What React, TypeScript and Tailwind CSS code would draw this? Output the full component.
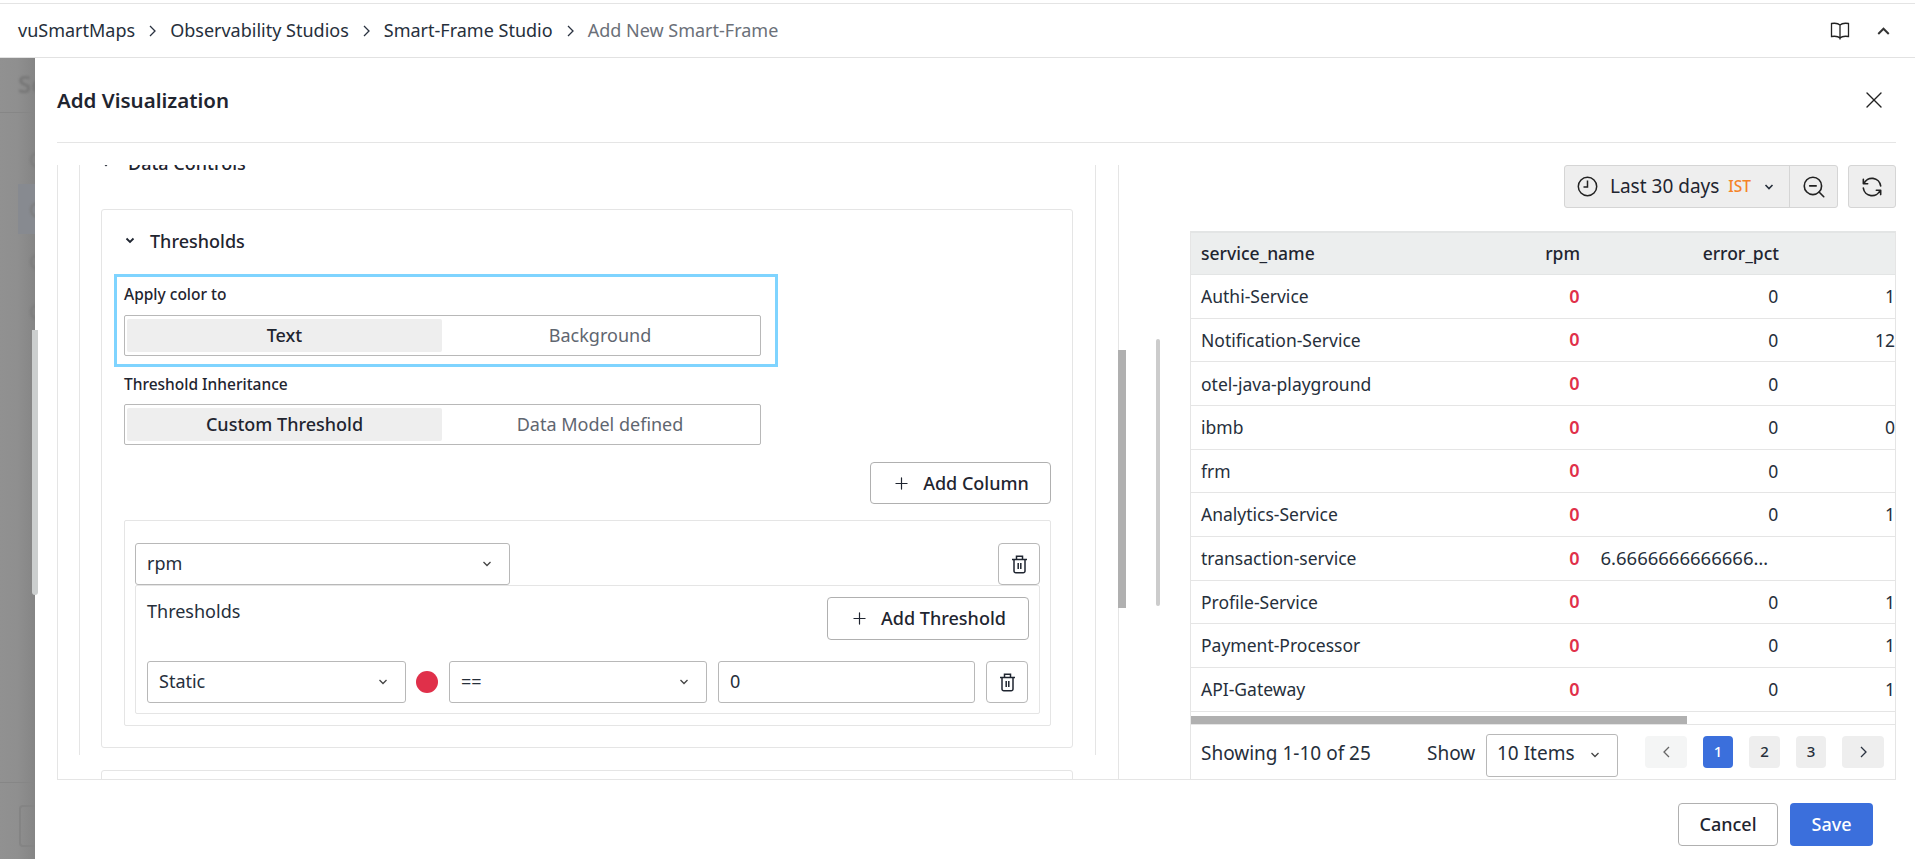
import { Plus, X, ZoomOut } from "lucide-react";

const rows: { name: string; err: string; last: string }[] = [
  { name: "Authi-Service", err: "0", last: "1" },
  { name: "Notification-Service", err: "0", last: "12" },
  { name: "otel-java-playground", err: "0", last: "" },
  { name: "ibmb", err: "0", last: "0" },
  { name: "frm", err: "0", last: "" },
  { name: "Analytics-Service", err: "0", last: "1" },
  { name: "transaction-service", err: "6.666666666666667", last: "" },
  { name: "Profile-Service", err: "0", last: "1" },
  { name: "Payment-Processor", err: "0", last: "1" },
  { name: "API-Gateway", err: "0", last: "1" },
];

function Chevron({ className, weight = 1.3 }: { className?: string; weight?: number }) {
  return (
    <svg className={className} viewBox="0 0 10 6" fill="none" stroke="currentColor" strokeWidth={weight}>
      <path d="M1.5 1l3.5 3.5L8.5 1" />
    </svg>
  );
}

function Crumb({ className = "text-[#2a3240]" }: { className?: string }) {
  return (
    <svg className={`w-[7px] h-[12px] ${className}`} viewBox="0 0 7 12" fill="none" stroke="currentColor" strokeWidth={1.3}>
      <path d="M1 1l5 5-5 5" />
    </svg>
  );
}

function TrashIcon() {
  return (
    <svg className="w-[17px] h-[19px] text-[#1f2530]" viewBox="0 0 17 19" fill="none" stroke="currentColor" strokeWidth={1.5}>
      <path d="M1 4.5h15M5.5 4.5V1.2h6v3.3M3 4.5V16a1.8 1.8 0 001.8 1.8h7.4A1.8 1.8 0 0014 16V4.5" />
      <path d="M7.2 8v6M9.8 8v6" />
    </svg>
  );
}

function Select({ label, className }: { label: string; className: string }) {
  return (
    <div className={`flex items-center justify-between pl-[11px] pr-[17px] h-[42px] border border-[#b8b8b8] rounded-[3px] bg-white text-[#262f3b] ${className}`}>
      <span className="-mt-[2px]">{label}</span>
      <Chevron className="w-[10px] h-[6px] text-[#444]" />
    </div>
  );
}

function Segmented({ left, right }: { left: string; right: string }) {
  return (
    <div className="flex w-[637px] h-[41px] px-[2px] py-[3px] border border-[#b8b8b8] rounded-[2px]">
      <div className="w-[315px] rounded-[2px] bg-[#eeeeee] flex items-center justify-center font-medium text-[#1f2530]">{left}</div>
      <div className="flex-1 flex items-center justify-center text-[#5f6670]">{right}</div>
    </div>
  );
}

function OutlineButton({ label, className }: { label: string; className: string }) {
  return (
    <div className={`flex items-center justify-center gap-[12px] border border-[#b0b0b0] rounded-[4px] bg-white font-medium text-[#1f2530] ${className}`}>
      <Plus className="w-[19px] h-[19px]" strokeWidth={1.5} />
      {label}
    </div>
  );
}

function PageButton({ children, className }: { children: React.ReactNode; className: string }) {
  return (
    <div className={`h-[32px] rounded-[4px] flex items-center justify-center text-[15px] font-medium ${className}`}>{children}</div>
  );
}

export default function App() {
  return (
    <div className="h-[859px] w-[1915px] overflow-hidden flex flex-col bg-white text-[18px] font-['Noto_Sans',sans-serif] text-[#262f3b]">
      {/* Top bar */}
      <div className="h-[58px] shrink-0 border-b border-[#e2e2e2] pt-[3px]">
        <div className="h-[54px] border-t border-[#e4e4e4] flex items-center justify-between pl-[18px] pr-[24px]">
          <div className="flex items-center gap-[14px] text-[#262f3b]">
            <span>vuSmartMaps</span>
            <Crumb />
            <span>Observability Studios</span>
            <Crumb />
            <span>Smart-Frame Studio</span>
            <Crumb />
            <span className="text-[#6b7079]">Add New Smart-Frame</span>
          </div>
          <div className="flex items-center gap-[26px]">
            <svg className="w-[20px] h-[18px] text-[#222]" viewBox="0 0 20 18" fill="none" stroke="currentColor" strokeWidth={1.3}>
              <path d="M10 3C8.5 1.5 5 1 1.5 1.5V14.5C5 14 8.5 14.5 10 16C11.5 14.5 15 14 18.5 14.5V1.5C15 1 11.5 1.5 10 3ZM10 3V17.5" />
            </svg>
            <Chevron className="w-[15px] h-[10px] rotate-180 text-[#333]" />
          </div>
        </div>
      </div>

      <div className="flex-1 flex min-h-0 relative">
        {/* Dimmed page behind the drawer */}
        <div className="w-[35px] shrink-0 bg-gradient-to-r from-[#919191] via-[#8f8f8f] to-[#858585] overflow-hidden relative text-[#777777]">
          <div className="absolute left-[18px] top-[8px] text-[24px] font-semibold blur-[1px]">Se</div>
          <div className="absolute left-0 right-0 top-[54px] border-t border-[#868686]" />
          <div className="absolute left-[18px] right-0 top-[126px] h-[50px] bg-[#878a90]" />
          <div className="absolute left-[30px] top-[94px] w-[16px] h-[16px] rounded-full border-2 border-[#7c7c7c] blur-[1px]" />
          <div className="absolute left-[30px] top-[144px] w-[16px] h-[16px] rounded-full border-2 border-[#7c7c7c] blur-[1px]" />
          <div className="absolute left-[30px] top-[196px] w-[16px] h-[16px] rounded-full border-2 border-[#7c7c7c] blur-[1px]" />
          <div className="absolute left-[30px] top-[246px] w-[16px] h-[16px] rounded-full border-2 border-[#7c7c7c] blur-[1px]" />
          <div className="absolute left-0 right-0 top-[724px] border-t border-[#868686]" />
          <div className="absolute left-[19px] top-[747px] w-[40px] h-[42px] rounded-[4px] border-2 border-[#848484]" />
        </div>
        <div className="absolute left-[32px] top-[272px] w-[6px] h-[265px] rounded-b-[3px] bg-[#cccfcf]" />

        {/* Drawer */}
        <div className="flex-1 min-w-0 bg-white flex flex-col pl-[22px] pr-[19px]">
          <div className="h-[85px] shrink-0 border-b border-[#e5e5e5] flex items-center justify-between">
            <span className="text-[20.5px] font-semibold text-[#1f2530]">Add Visualization</span>
            <X className="w-[28px] h-[28px] mr-[8px] text-[#222]" strokeWidth={1.2} />
          </div>

          <div className="flex-1 min-h-0 mt-[22px] flex border-b border-[#e5e5e5]">
            {/* Config panel */}
            <div className="w-[1062px] shrink-0 h-full overflow-hidden border-x border-[#e5e5e5] pl-[21px] pr-[22px]">
              <div className="border-x border-[#e5e5e5] h-full pl-[21px] pr-[22px]">
                <div className="h-[44px] -mt-[24px] flex items-center gap-[18px] font-medium text-[#1f2530]">
                  <Chevron className="w-[8px] h-[5px] ml-[1px] mt-[2px]" />
                  <span>Data Controls</span>
                </div>

                <div className="border border-[#e5e5e5] rounded-[3px] mt-[24px] h-[539px] pl-[18px] pr-[21px]">
                  <div className="h-[62px] mb-[2px] flex items-center gap-[15px] -ml-[1px] font-medium text-[#1f2530]">
                    <Chevron className="w-[10px] h-[7px] ml-[6px] -mt-[2px]" weight={1.8} />
                    <span>Thresholds</span>
                  </div>

                  <div className="-ml-[6px] w-[664px] h-[93px] border-[3px] border-[#7fd4ff] pl-[7px] flex flex-col">
                    <div className="h-[36px] mb-[2px] flex items-center text-[15.5px] font-medium text-[#1f2530]">Apply color to</div>
                    <Segmented left="Text" right="Background" />
                  </div>

                  <div className="h-[35px] mb-[2px] flex items-center pl-[4px] text-[15.5px] font-medium text-[#1f2530]">Threshold Inheritance</div>
                  <div className="ml-[4px]">
                    <Segmented left="Custom Threshold" right="Data Model defined" />
                  </div>

                  <div className="flex justify-end mt-[17px]">
                    <OutlineButton label="Add Column" className="w-[181px] h-[42px]" />
                  </div>

                  <div className="ml-[4px] mt-[16px] h-[206px] border border-[#e5e5e5] rounded-[2px] pl-[10px] pr-[10px] pt-[22px]">
                    <div className="flex justify-between">
                      <Select label="rpm" className="w-[375px]" />
                      <div className="w-[42px] h-[42px] border border-[#b8b8b8] rounded-[4px] flex items-center justify-center"><TrashIcon /></div>
                    </div>
                    <div className="h-[129px] border border-[#e5e5e5] rounded-[2px] pl-[11px] pr-[10px] pt-[11px]">
                      <div className="flex justify-between">
                        <span className="mt-[1px]">Thresholds</span>
                        <OutlineButton label="Add Threshold" className="w-[202px] h-[43px]" />
                      </div>
                      <div className="flex items-center mt-[21px]">
                        <Select label="Static" className="w-[259px]" />
                        <div className="w-[22px] h-[22px] rounded-full bg-[#e0304a] ml-[10px] mr-[11px]" />
                        <Select label="==" className="w-[258px]" />
                        <div className="w-[257px] h-[42px] ml-[11px] pl-[11px] flex items-center border border-[#b8b8b8] rounded-[3px]"><span className="-mt-[2px]">0</span></div>
                        <div className="w-[42px] h-[42px] ml-[11px] border border-[#b8b8b8] rounded-[4px] flex items-center justify-center"><TrashIcon /></div>
                      </div>
                    </div>
                  </div>
                </div>

                <div className="border border-[#e5e5e5] rounded-[3px] mt-[22px] h-[60px]" />
              </div>
            </div>

            <div className="w-[71px] shrink-0 relative">
              <div className="absolute left-[-1px] top-[185px] w-[8px] h-[258px] bg-[#b0b0b0]" />
              <div className="absolute left-[37px] top-[174px] w-[4px] h-[267px] rounded-full bg-[#cccccc]" />
            </div>

            {/* Preview panel */}
            <div className="flex-1 min-w-0 flex flex-col">
              <div className="flex justify-end gap-[10px] h-[43px] shrink-0">
                <div className="flex h-full w-[274px] bg-[#eeeeee] border border-[#d5d5d5] rounded-[3px]">
                  <div className="flex-1 flex items-center pl-[12px] border-r border-[#d5d5d5]">
                    <svg className="w-[21px] h-[21px] text-[#222] mr-[12px]" viewBox="0 0 21 21" fill="none" stroke="currentColor" strokeWidth={1.5}>
                      <circle cx="10.5" cy="10.5" r="9.2" />
                      <path d="M10.5 4.5v6.5H6.5" />
                    </svg>
                    <span className="text-[#1f2530] text-[19px]">Last 30 days</span>
                    <span className="text-[15.5px] font-medium text-[#f5842a] ml-[9px]">IST</span>
                    <Chevron className="w-[10px] h-[6px] ml-[13px]" weight={1.6} />
                  </div>
                  <div className="w-[47px] flex items-center justify-center">
                    <ZoomOut className="w-[26px] h-[26px] text-[#222]" strokeWidth={1.5} />
                  </div>
                </div>
                <div className="w-[48px] h-full bg-[#eeeeee] border border-[#d5d5d5] rounded-[3px] flex items-center justify-center">
                  <svg className="w-[26px] h-[26px] text-[#222]" viewBox="0 0 24 24" fill="none" stroke="currentColor" strokeWidth={1.5} strokeLinecap="round" strokeLinejoin="round">
                    <path d="M20 11a8.1 8.1 0 0 0-15.5-2m-.5-4v4h4" />
                    <path d="M4 13a8.1 8.1 0 0 0 15.5 2m.5 4v-4h-4" />
                  </svg>
                </div>
              </div>

              <div className="flex-1 min-h-0 mt-[23px] border-x border-[#e5e5e5] flex flex-col overflow-hidden text-[17.5px]">
                <div className="h-[44px] shrink-0 flex items-center bg-[#eceeee] border-t-2 border-b border-[#e3e5e5] font-medium text-[#1f2530]">
                  <div className="w-[299px] pl-[10px]">service_name</div>
                  <div className="w-[100px] pr-[10px] text-right">rpm</div>
                  <div className="w-[199px] pr-[10px] text-right">error_pct</div>
                </div>
                {rows.map((row) => (
                  <div key={row.name} className="h-[43.67px] shrink-0 flex items-center border-b border-[#e5e5e5] last:border-b-0">
                    <div className="w-[299px] pl-[10px]">{row.name}</div>
                    <div className="w-[100px] pr-[10px] text-right font-semibold text-[18px] text-[#e0304a]">0</div>
                    <div className={row.err.length > 1 ? "w-[199px] pl-[11px] pr-[19px] text-[18.5px] truncate" : "w-[199px] pr-[10px] text-right"}>{row.err}</div>
                    <div className="w-[107px] text-right">{row.last}</div>
                  </div>
                ))}
                <div className="h-[4px] shrink-0" />
                <div className="h-[9px] shrink-0 border-b border-[#e5e5e5]">
                  <div className="w-[496px] h-[8px] bg-[#b0b0b0]" />
                </div>
                <div className="flex-1 min-h-0 flex items-start pt-[9px] pl-[10px] text-[19px]">
                  <span className="w-[226px] h-[43px] pb-[3px] flex items-center shrink-0">Showing 1-10 of 25</span>
                  <span className="w-[59px] h-[43px] pb-[3px] flex items-center shrink-0">Show</span>
                  <div className="w-[132px] h-[43px] flex items-center justify-between pl-[10px] pr-[17px] border border-[#b8b8b8] rounded-[3px]">
                    <span className="-mt-[3px]">10 Items</span>
                    <Chevron className="w-[10px] h-[6px] text-[#444]" />
                  </div>
                  <div className="flex items-center gap-[16px] ml-[27px] mt-[2px]">
                    <PageButton className="w-[42px] bg-[#f4f5f5]"><Crumb className="rotate-180 text-[#666]" /></PageButton>
                    <PageButton className="w-[30px] bg-[#3b6fdc] text-white">1</PageButton>
                    <PageButton className="w-[31px] bg-[#eeeeee]">2</PageButton>
                    <PageButton className="w-[30px] bg-[#eeeeee]">3</PageButton>
                    <PageButton className="w-[42px] bg-[#eeeeee]"><Crumb /></PageButton>
                  </div>
                </div>
              </div>
            </div>
          </div>

          <div className="h-[79px] shrink-0 flex items-start justify-end gap-[12px] pt-[23px] pr-[23px]">
            <div className="w-[100px] h-[43px] border border-[#b0b0b0] rounded-[4px] flex items-center justify-center font-medium text-[#1f2530]">Cancel</div>
            <div className="w-[83px] h-[43px] rounded-[4px] bg-[#3b6fdc] flex items-center justify-center font-medium text-white">Save</div>
          </div>
        </div>
      </div>
    </div>
  );
}
